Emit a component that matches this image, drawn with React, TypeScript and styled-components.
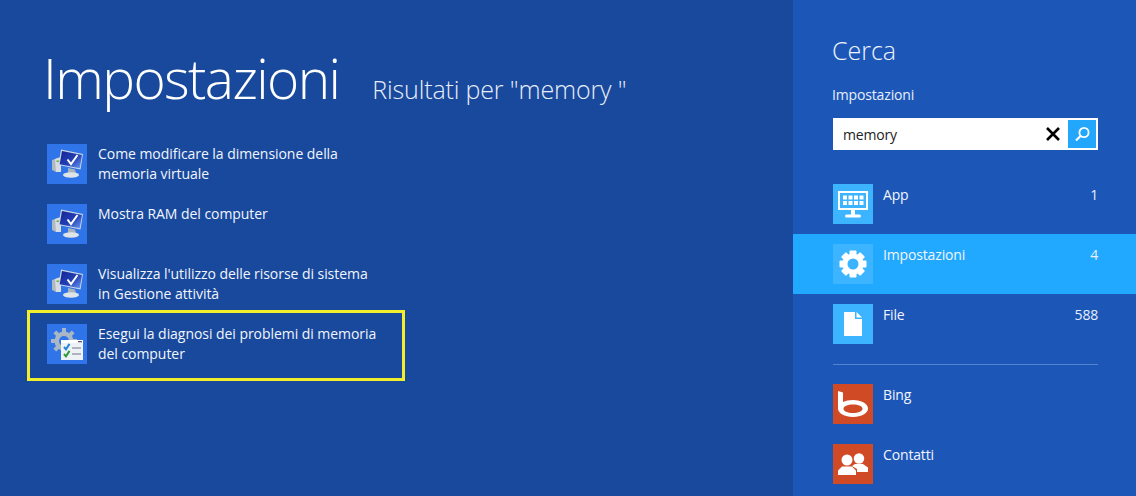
import styled, { createGlobalStyle } from "styled-components";

const GlobalStyle = createGlobalStyle`
  html, body {
    margin: 0;
    padding: 0;
    width: 1136px;
    height: 496px;
    overflow: hidden;
    background: #18499c;
  }
  * {
    box-sizing: border-box;
  }
`;

const Screen = styled.div`
  display: flex;
  width: 1136px;
  height: 496px;
  overflow: hidden;
  font-family: "Open Sans", "Noto Sans", sans-serif;
  color: #fff;
`;

const Results = styled.main`
  flex: 0 0 793px;
  background: #18499c;
  padding: 40px 0 0 43px;
`;

const Heading = styled.div`
  display: flex;
  align-items: baseline;
  height: 104px;
`;

const Title = styled.h1`
  margin: 0;
  font-size: 55px;
  line-height: 76px;
  font-weight: 300;
  letter-spacing: -1.6px;
`;

const Subtitle = styled.span`
  margin-left: 33px;
  font-size: 25px;
  font-weight: 300;
  letter-spacing: -0.15px;
  white-space: pre;
  color: #e8eefa;
`;

const ResultList = styled.div`
  display: flex;
  flex-direction: column;
  gap: 20px;
  padding-left: 4px;
`;

const ResultRow = styled.div<{ $selected?: boolean }>`
  position: relative;
  display: flex;
  align-items: flex-start;
  gap: 11px;
  height: 40px;
  ${(p) =>
    p.$selected &&
    `
    &::after {
      content: "";
      box-sizing: border-box;
      position: absolute;
      left: -20px;
      top: -14px;
      width: 378px;
      height: 71px;
      border: 3px solid #f3ee2c;
    }
  `}
`;

const ResultTile = styled.div`
  flex: 0 0 40px;
  width: 40px;
  height: 40px;
  background: #2f74e8;
`;

const ResultText = styled.div`
  font-size: 14px;
  line-height: 20px;
  letter-spacing: -0.05px;
  color: #f2f5fc;
`;

const Charm = styled.aside`
  flex: 1;
  background: #1c57b8;
  padding-top: 32px;
`;

const CharmTitle = styled.h2`
  margin: 0 0 0 39px;
  font-size: 25px;
  line-height: 36px;
  font-weight: 300;
  letter-spacing: 0;
  color: #eef3fc;
`;

const ScopeLabel = styled.div`
  margin: 17px 0 0 39px;
  font-size: 14px;
  line-height: 20px;
  letter-spacing: -0.15px;
  color: #e8eefa;
`;

const SearchBox = styled.div`
  display: flex;
  align-items: center;
  width: 265px;
  height: 32px;
  margin: 13px 0 0 40px;
  padding: 2px 2px 2px 10px;
  background: #fff;
`;

const SearchText = styled.span`
  flex: 1;
  font-size: 14px;
  letter-spacing: -0.2px;
  color: #222;
`;

const ClearButton = styled.div`
  display: flex;
  align-items: center;
  justify-content: center;
  width: 30px;
  height: 28px;
`;

const SearchButton = styled.div`
  display: flex;
  align-items: center;
  justify-content: center;
  width: 28px;
  height: 28px;
  background: #22a7fd;
`;

const CategoryList = styled.div`
  display: flex;
  flex-direction: column;
  margin-top: 24px;
`;

const Category = styled.div<{ $active?: boolean }>`
  display: flex;
  align-items: flex-start;
  height: 60px;
  padding: 10px 38px 0 40px;
  background: ${(p) => (p.$active ? "#20a9ff" : "transparent")};
`;

const Tile = styled.div<{ $color: string }>`
  display: flex;
  align-items: center;
  justify-content: center;
  flex: 0 0 40px;
  height: 40px;
  background: ${(p) => p.$color};
`;

const CategoryName = styled.span`
  flex: 1;
  margin: 1px 0 0 10px;
  font-size: 14px;
  line-height: 20px;
  letter-spacing: -0.15px;
  color: #f2f5fc;
`;

const CategoryCount = styled.span`
  margin-top: 1px;
  font-size: 14px;
  line-height: 20px;
  letter-spacing: -0.2px;
  color: #e8eefa;
`;

const Divider = styled.hr`
  width: 265px;
  height: 1px;
  margin: 10px 0 9px 40px;
  border: none;
  background: #5283d0;
`;

const MonitorIcon = () => (
  <svg width="40" height="40" viewBox="0 0 40 40">
    <defs>
      <linearGradient id="monitorScreen" x1="0" y1="0" x2="1" y2="1">
        <stop offset="0" stopColor="#14248f" />
        <stop offset="0.55" stopColor="#2340b8" />
        <stop offset="1" stopColor="#6f9df0" />
      </linearGradient>
    </defs>
    <path d="M5 16l9-3v15l-5 0-4-2z" fill="#aeb9c2" />
    <path d="M8 15l6-2v15H9z" fill="#d5dde2" />
    <rect x="9.500" y="16.500" width="3" height="1.500" fill="#6fb04a" />
    <path d="M14 5.500l22 4.500-2.500 15.500-22-4.500z" fill="#c8d6e6" />
    <path d="M15 7l20 4-2.300 13.200-20-4z" fill="url(#monitorScreen)" />
    <path d="M20.500 15.500l3.500 4.500 6.500-9" fill="none" stroke="#fff" strokeWidth="2" />
    <path d="M21 24l7 1.500 1 3.500h-8z" fill="#aab4bc" />
    <ellipse cx="24" cy="31" rx="8" ry="2.700" fill="#dfe4e8" />
  </svg>
);

const DiagnosticIcon = () => (
  <svg width="40" height="40" viewBox="0 0 40 40">
    <g fill="#a9b6c4">
      <circle cx="17" cy="17" r="9.500" />
      <rect x="15" y="4" width="4" height="26" />
      <rect x="4" y="15" width="26" height="4" />
      <rect x="15" y="4" width="4" height="26" transform="rotate(45 17 17)" />
      <rect x="15" y="4" width="4" height="26" transform="rotate(-45 17 17)" />
    </g>
    <circle cx="17" cy="17" r="5" fill="#2f74e8" />
    <rect x="14" y="16" width="22" height="20" fill="#eef2f6" />
    <rect x="14" y="16" width="22" height="3" fill="#fff" />
    <rect x="31" y="17" width="4" height="1.300" fill="#556" />
    <path d="M17 23l2 2.400 3.500-5.500" fill="none" stroke="#1f86d8" strokeWidth="2" />
    <path d="M17 30l2 2.400 3.500-5.500" fill="none" stroke="#2f9c38" strokeWidth="2" />
    <path d="M25 24h9M25 30h9" stroke="#6c7684" strokeWidth="1.200" />
  </svg>
);

const KeyboardIcon = () => (
  <svg width="30" height="27" viewBox="0 0 30 27">
    <rect x="1" y="1" width="28" height="17" fill="none" stroke="#fff" strokeWidth="2" />
    <path
      d="M5 4.500h4v4H5zM10.500 4.500h4v4h-4zM16 4.500h4v4h-4zM21.500 4.500h4v4h-4zM5 10h4v4H5zM10.500 10h4v4h-4zM16 10h4v4h-4zM21.500 10h4v4h-4z"
      fill="#fff"
    />
    <rect x="13" y="19" width="4" height="5" fill="#fff" />
    <rect x="7" y="23.500" width="16" height="3" rx="1.500" fill="#fff" />
  </svg>
);

const GearIcon = () => (
  <svg width="28" height="28" viewBox="0 0 28 28">
    <g fill="#fff">
      <rect x="10.500" y="0.500" width="7" height="27" rx="1" />
      <rect x="10.500" y="0.500" width="7" height="27" rx="1" transform="rotate(45 14 14)" />
      <rect x="10.500" y="0.500" width="7" height="27" rx="1" transform="rotate(90 14 14)" />
      <rect x="10.500" y="0.500" width="7" height="27" rx="1" transform="rotate(135 14 14)" />
      <circle cx="14" cy="14" r="10.500" />
    </g>
    <circle cx="14" cy="14" r="5.500" fill="#3db4ff" />
  </svg>
);

const FileIcon = () => (
  <svg width="18" height="24" viewBox="0 0 18 24">
    <path d="M0 0h11v7h7v17H0z" fill="#fff" />
    <path d="M12.500 0L18 5.500h-5.500z" fill="#fff" />
  </svg>
);

const BingIcon = () => (
  <svg width="30" height="26" viewBox="0 0 30 26">
    <path
      fillRule="evenodd"
      d="M0 0l5 1.500v9.500c2.500-1.300 6-2 10-2 8.500 0 15 3.700 15 8.500S23.500 26 15 26 0 22.300 0 17.500z M15 13.500c-5.500 0-9.500 1.700-9.500 4.200S9.500 22 15 22s9.500-1.800 9.500-4.300S20.500 13.500 15 13.500z"
      fill="#fff"
    />
  </svg>
);

const PeopleIcon = () => (
  <svg width="30" height="22" viewBox="0 0 30 22">
    <circle cx="21" cy="5.500" r="5.200" fill="#fff" />
    <path d="M17 11h8l5 3.500V19H19v-3l-5-3z" fill="#fff" />
    <circle cx="9" cy="7" r="5.500" fill="#fff" />
    <path d="M0 22v-4.500L4 13.500h10l4 4V22z" fill="#fff" />
  </svg>
);

const SearchGlyph = () => (
  <svg width="18" height="18" viewBox="0 0 18 18">
    <circle cx="11" cy="7.500" r="4.600" fill="none" stroke="#fff" strokeWidth="1.800" />
    <path d="M7.500 11L3 15.500" stroke="#fff" strokeWidth="2.200" />
  </svg>
);

const ClearGlyph = () => (
  <svg width="14" height="14" viewBox="0 0 14 14">
    <path d="M1 1l12 12M13 1L1 13" stroke="#000" strokeWidth="2.600" />
  </svg>
);

const results = [
  { lines: ["Come modificare la dimensione della", "memoria virtuale"], icon: <MonitorIcon /> },
  { lines: ["Mostra RAM del computer"], icon: <MonitorIcon /> },
  { lines: ["Visualizza l'utilizzo delle risorse di sistema", "in Gestione attività"], icon: <MonitorIcon /> },
  {
    lines: ["Esegui la diagnosi dei problemi di memoria", "del computer"],
    icon: <DiagnosticIcon />,
    selected: true,
  },
];

export default function App() {
  return (
    <Screen>
      <GlobalStyle />
      <Results>
        <Heading>
          <Title>Impostazioni</Title>
          <Subtitle>Risultati per "memory "</Subtitle>
        </Heading>
        <ResultList>
          {results.map((r) => (
            <ResultRow key={r.lines[0]} $selected={r.selected}>
              <ResultTile>{r.icon}</ResultTile>
              <ResultText>
                {r.lines.map((l) => (
                  <div key={l}>{l}</div>
                ))}
              </ResultText>
            </ResultRow>
          ))}
        </ResultList>
      </Results>
      <Charm>
        <CharmTitle>Cerca</CharmTitle>
        <ScopeLabel>Impostazioni</ScopeLabel>
        <SearchBox>
          <SearchText>memory</SearchText>
          <ClearButton>
            <ClearGlyph />
          </ClearButton>
          <SearchButton>
            <SearchGlyph />
          </SearchButton>
        </SearchBox>
        <CategoryList>
          <Category>
            <Tile $color="#3db4ff">
              <KeyboardIcon />
            </Tile>
            <CategoryName>App</CategoryName>
            <CategoryCount>1</CategoryCount>
          </Category>
          <Category $active>
            <Tile $color="#3db4ff">
              <GearIcon />
            </Tile>
            <CategoryName>Impostazioni</CategoryName>
            <CategoryCount>4</CategoryCount>
          </Category>
          <Category>
            <Tile $color="#3db4ff">
              <FileIcon />
            </Tile>
            <CategoryName>File</CategoryName>
            <CategoryCount>588</CategoryCount>
          </Category>
          <Divider />
          <Category>
            <Tile $color="#d04a25">
              <BingIcon />
            </Tile>
            <CategoryName>Bing</CategoryName>
          </Category>
          <Category>
            <Tile $color="#d04a25">
              <PeopleIcon />
            </Tile>
            <CategoryName>Contatti</CategoryName>
          </Category>
        </CategoryList>
      </Charm>
    </Screen>
  );
}
